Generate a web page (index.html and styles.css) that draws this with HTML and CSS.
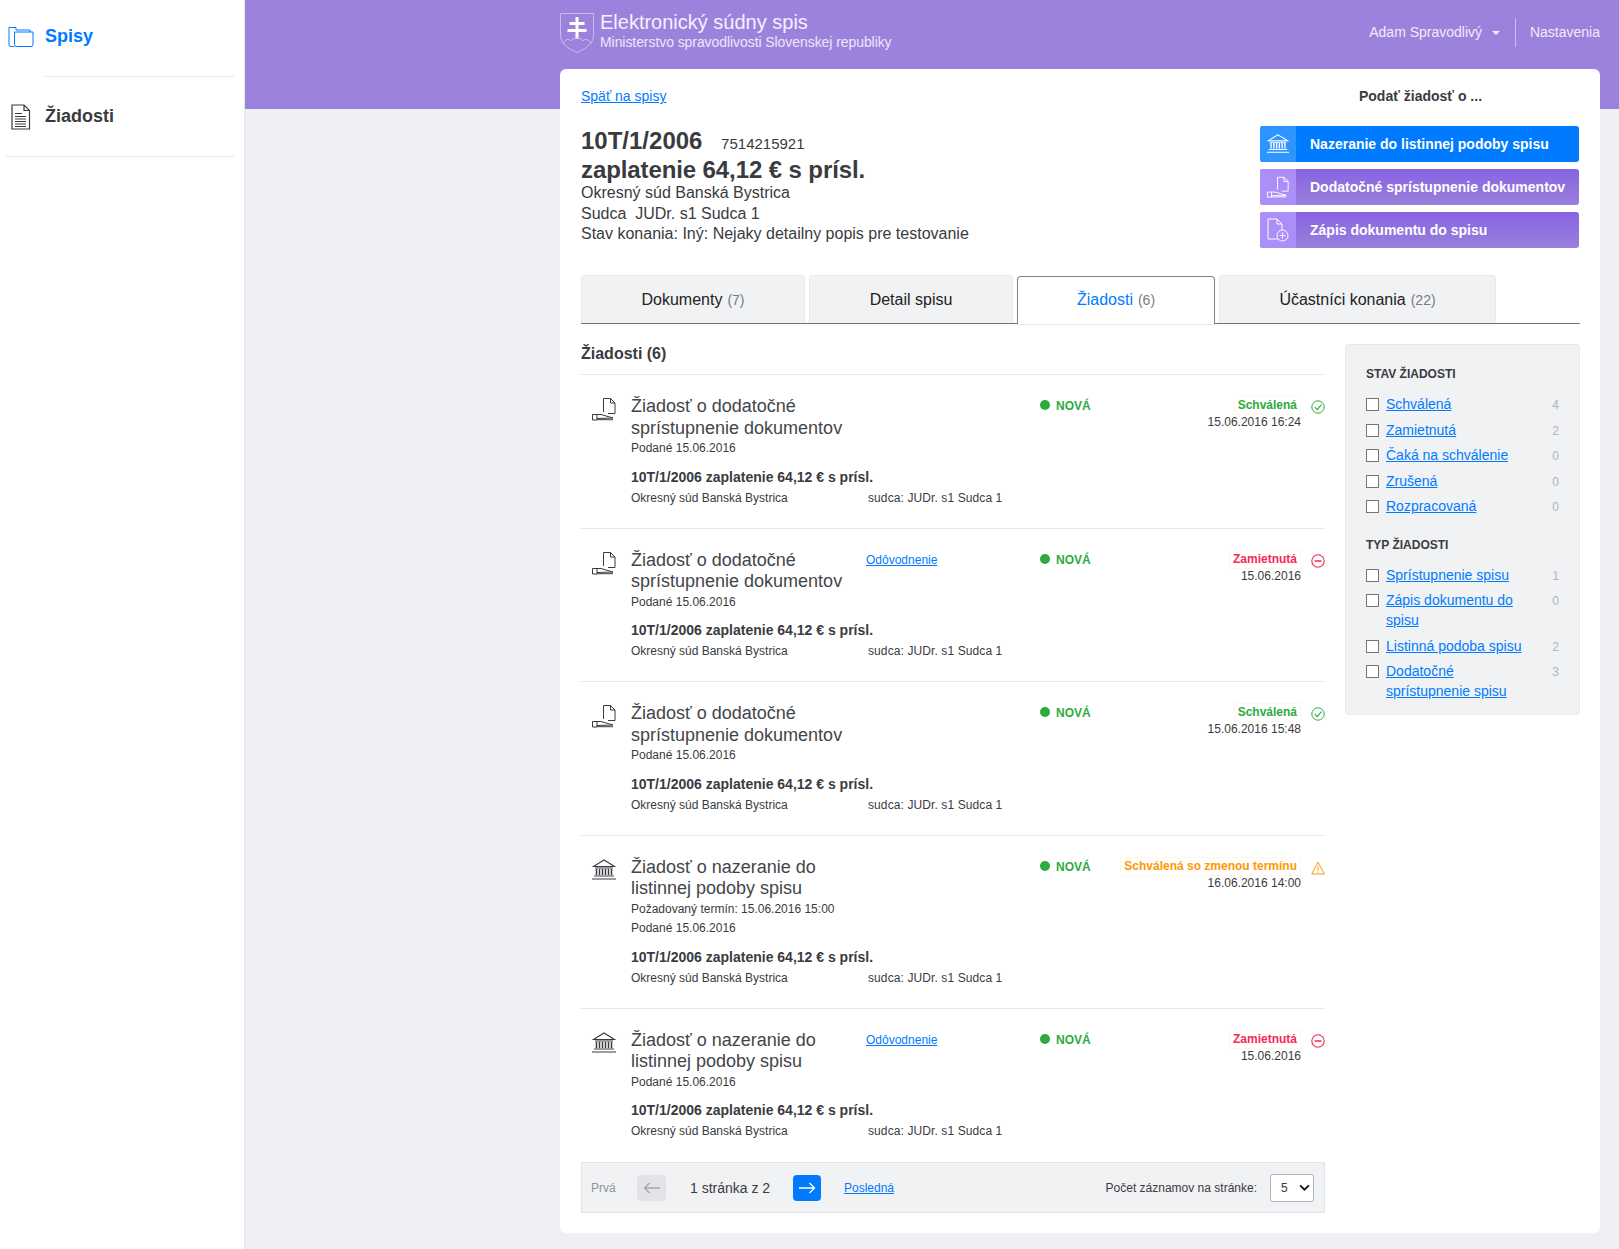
FILE: index.html
```html
<!DOCTYPE html>
<html lang="sk">
	<head>
		<meta charset="utf-8">
		<title>Elektronický súdny spis</title>
		<link rel="stylesheet" href="styles.css">
	</head>
	<body>
		<svg class="sprite" xmlns="http://www.w3.org/2000/svg">
			<symbol id="i-court" viewBox="0 0 26 24">
				<path d="M13 2 2.500 8.500h21zM4 10h18M3 18h20M1 21h24" fill="none" stroke="currentColor" stroke-width="1.100"/>
				<path d="M5.500 11v6M8.500 11v6M11.500 11v6M14.500 11v6M17.500 11v6M20.500 11v6" fill="none" stroke="currentColor" stroke-width="1.500"/>
			</symbol>
			<symbol id="i-hand" viewBox="0 0 26 24">
				<path d="M12.500 15V1.500h7l4.500 4.500V16.500h-7M19.500 1.500V6H24" fill="none" stroke="currentColor" stroke-width="1"/>
				<path d="M1.500 17.500h4.500v5.500H1.500zM6 17.500h4l12 3.500-16 .5M6 22.700h16" fill="none" stroke="currentColor" stroke-width="1"/>
			</symbol>
			<symbol id="i-doc-add" viewBox="0 0 22 24">
				<path d="M11 21H1V1h9l5 5v6M10 1v5h5" fill="none" stroke="currentColor" stroke-width="1"/>
				<circle cx="15.500" cy="17.500" r="5.500" fill="none" stroke="currentColor" stroke-width="1"/>
				<path d="M15.500 14.500v6M12.500 17.500h6" fill="none" stroke="currentColor" stroke-width="1"/>
			</symbol>
			<symbol id="i-ok" viewBox="0 0 14 14">
				<circle cx="7" cy="7" r="6.200" fill="none" stroke="currentColor" stroke-width="1"/>
				<path d="M3.800 7.200 6.200 9.600 10.500 4.600" fill="none" stroke="currentColor" stroke-width="1.100"/>
			</symbol>
			<symbol id="i-no" viewBox="0 0 14 14">
				<circle cx="7" cy="7" r="6.200" fill="none" stroke="currentColor" stroke-width="1.100"/>
				<path d="M3.500 7h7" fill="none" stroke="currentColor" stroke-width="1.500"/>
			</symbol>
			<symbol id="i-warn" viewBox="0 0 14 14">
				<path d="M7 1.200 13.300 13H.700zM7 5v4.500M7 10.500v1.200" fill="none" stroke="currentColor" stroke-width="1"/>
			</symbol>
		</svg>

		<div class="app">
			<aside class="sidebar">
				<a class="nav-item nav-active">
					<svg class="nav-icon" viewBox="0 0 26 22"><path d="M6 20.500H3a2 2 0 0 1-2-2V1.500h7V4h14v2" fill="none" stroke="currentColor" stroke-width="1"/><path d="M6.500 6H25v12.500a2 2 0 0 1-2 2H8.500a2 2 0 0 1-2-2z" fill="none" stroke="currentColor" stroke-width="1"/></svg>
					Spisy
				</a>
				<hr class="nav-line nav-line-short">
				<a class="nav-item">
					<svg class="nav-icon" viewBox="0 0 26 26"><path d="M4 1h12l5.500 5.500V25H4zM16 1v5.500h5.500" fill="none" stroke="currentColor" stroke-width="1.200"/><path d="M7 9.500h7M7 12.500h11M7 15h11M7 17.500h11M7 20h11M7 22.500h11" fill="none" stroke="currentColor" stroke-width="1"/></svg>
					Žiadosti
				</a>
				<hr class="nav-line">
			</aside>

			<div class="main">
				<header class="topbar">
					<div class="brand">
						<svg class="crest" viewBox="0 0 34 40">
							<path d="M.500.500h33V22c0 9-8 13.500-16.500 17.500C8.500 35.500.500 31 .500 22z" fill="none" stroke="#c9bbee" stroke-width="1"/>
							<path d="M15.500 4h3v5h6v3h-6v4h8v3h-8v7h-3v-7h-8v-3h8v-4h-6V9h6z" fill="#fff"/>
							<path d="M3 31c2-5 6-6 8-3 2-4 10-4 12 0 2-3 6-2 8 3" fill="none" stroke="#c9bbee" stroke-width="1"/>
						</svg>
						<div>
							<div class="brand-title">Elektronický súdny spis</div>
							<div class="brand-sub">Ministerstvo spravodlivosti Slovenskej republiky</div>
						</div>
					</div>
					<div class="user-menu">
						<span class="user-name">Adam Spravodlivý <i class="caret"></i></span>
						<span class="user-settings">Nastavenia</span>
					</div>
				</header>

				<section class="card">
					<div class="case-head">
						<div class="case-info">
							<a class="link back-link" href="#">Späť na spisy</a>
							<div class="case-number">10T/1/2006 <span>7514215921</span></div>
							<div class="case-title">zaplatenie 64,12 € s prísl.</div>
							<div class="case-line">Okresný súd Banská Bystrica</div>
							<div class="case-line">Sudca&nbsp; JUDr. s1 Sudca 1</div>
							<div class="case-line">Stav konania: Iný: Nejaky detailny popis pre testovanie</div>
						</div>
						<div class="case-actions">
							<div class="actions-title">Podať žiadosť o ...</div>
							<a class="action action-blue"><span class="action-icon"><svg><use href="#i-court"/></svg></span>Nazeranie do listinnej podoby spisu</a>
							<a class="action"><span class="action-icon"><svg><use href="#i-hand"/></svg></span>Dodatočné sprístupnenie dokumentov</a>
							<a class="action"><span class="action-icon"><svg><use href="#i-doc-add"/></svg></span>Zápis dokumentu do spisu</a>
						</div>
					</div>

					<nav class="tabs">
						<a class="tab tab-1">Dokumenty <small>(7)</small></a>
						<a class="tab tab-2">Detail spisu</a>
						<a class="tab tab-3 tab-active">Žiadosti <small>(6)</small></a>
						<a class="tab tab-4">Účastníci konania <small>(22)</small></a>
					</nav>

					<div class="content">
						<div class="list">
							<h2 class="list-title">Žiadosti (6)</h2>

							<article class="item">
								<svg class="item-icon"><use href="#i-hand"/></svg>
								<div class="item-head">
									<div class="item-name">Žiadosť o dodatočné sprístupnenie dokumentov</div>
									<div class="item-small">Podané 15.06.2016</div>
								</div>
								<div class="item-reason"></div>
								<div class="item-new">NOVÁ</div>
								<div class="item-state state-ok">
									<div><span class="state-label">Schválená</span><div>15.06.2016 16:24</div></div>
									<svg><use href="#i-ok"/></svg>
								</div>
								<div class="item-case">
									<strong>10T/1/2006 zaplatenie 64,12 € s prísl.</strong>
									<div class="item-court"><span>Okresný súd Banská Bystrica</span><span>sudca: JUDr. s1 Sudca 1</span></div>
								</div>
							</article>

							<article class="item">
								<svg class="item-icon"><use href="#i-hand"/></svg>
								<div class="item-head">
									<div class="item-name">Žiadosť o dodatočné sprístupnenie dokumentov</div>
									<div class="item-small">Podané 15.06.2016</div>
								</div>
								<div class="item-reason"><a class="link" href="#">Odôvodnenie</a></div>
								<div class="item-new">NOVÁ</div>
								<div class="item-state state-no">
									<div><span class="state-label">Zamietnutá</span><div>15.06.2016</div></div>
									<svg><use href="#i-no"/></svg>
								</div>
								<div class="item-case">
									<strong>10T/1/2006 zaplatenie 64,12 € s prísl.</strong>
									<div class="item-court"><span>Okresný súd Banská Bystrica</span><span>sudca: JUDr. s1 Sudca 1</span></div>
								</div>
							</article>

							<article class="item">
								<svg class="item-icon"><use href="#i-hand"/></svg>
								<div class="item-head">
									<div class="item-name">Žiadosť o dodatočné sprístupnenie dokumentov</div>
									<div class="item-small">Podané 15.06.2016</div>
								</div>
								<div class="item-reason"></div>
								<div class="item-new">NOVÁ</div>
								<div class="item-state state-ok">
									<div><span class="state-label">Schválená</span><div>15.06.2016 15:48</div></div>
									<svg><use href="#i-ok"/></svg>
								</div>
								<div class="item-case">
									<strong>10T/1/2006 zaplatenie 64,12 € s prísl.</strong>
									<div class="item-court"><span>Okresný súd Banská Bystrica</span><span>sudca: JUDr. s1 Sudca 1</span></div>
								</div>
							</article>

							<article class="item">
								<svg class="item-icon"><use href="#i-court"/></svg>
								<div class="item-head">
									<div class="item-name">Žiadosť o nazeranie do listinnej podoby spisu</div>
									<div class="item-small">Požadovaný termín: 15.06.2016 15:00</div>
									<div class="item-small">Podané 15.06.2016</div>
								</div>
								<div class="item-reason"></div>
								<div class="item-new">NOVÁ</div>
								<div class="item-state state-warn">
									<div><span class="state-label">Schválená so zmenou termínu</span><div>16.06.2016 14:00</div></div>
									<svg><use href="#i-warn"/></svg>
								</div>
								<div class="item-case">
									<strong>10T/1/2006 zaplatenie 64,12 € s prísl.</strong>
									<div class="item-court"><span>Okresný súd Banská Bystrica</span><span>sudca: JUDr. s1 Sudca 1</span></div>
								</div>
							</article>

							<article class="item">
								<svg class="item-icon"><use href="#i-court"/></svg>
								<div class="item-head">
									<div class="item-name">Žiadosť o nazeranie do listinnej podoby spisu</div>
									<div class="item-small">Podané 15.06.2016</div>
								</div>
								<div class="item-reason"><a class="link" href="#">Odôvodnenie</a></div>
								<div class="item-new">NOVÁ</div>
								<div class="item-state state-no">
									<div><span class="state-label">Zamietnutá</span><div>15.06.2016</div></div>
									<svg><use href="#i-no"/></svg>
								</div>
								<div class="item-case">
									<strong>10T/1/2006 zaplatenie 64,12 € s prísl.</strong>
									<div class="item-court"><span>Okresný súd Banská Bystrica</span><span>sudca: JUDr. s1 Sudca 1</span></div>
								</div>
							</article>

							<div class="pager">
								<span class="pager-first">Prvá</span>
								<span class="pager-btn pager-off"><svg viewBox="0 0 18 12"><path d="M17 6H1.500M6.500 1 1.500 6l5 5" fill="none" stroke="currentColor" stroke-width="1.300"/></svg></span>
								<span class="pager-text">1 stránka z 2</span>
								<span class="pager-btn pager-on"><svg viewBox="0 0 18 12"><path d="M1 6h15.500M11.500 1l5 5-5 5" fill="none" stroke="currentColor" stroke-width="1.300"/></svg></span>
								<a class="link pager-last" href="#">Posledná</a>
								<label class="pager-size">Počet záznamov na stránke:
									<span class="size-select">
										<select><option>5</option></select>
										<svg viewBox="0 0 12 8"><path d="M1 1.500 6 6.500l5-5" fill="none" stroke="currentColor" stroke-width="2"/></svg>
									</span>
								</label>
							</div>
						</div>

						<aside class="filter">
							<h3>Stav žiadosti</h3>
							<ul>
								<li><input type="checkbox"><a class="link" href="#">Schválená</a><span>4</span></li>
								<li><input type="checkbox"><a class="link" href="#">Zamietnutá</a><span>2</span></li>
								<li><input type="checkbox"><a class="link" href="#">Čaká na schválenie</a><span>0</span></li>
								<li><input type="checkbox"><a class="link" href="#">Zrušená</a><span>0</span></li>
								<li><input type="checkbox"><a class="link" href="#">Rozpracovaná</a><span>0</span></li>
							</ul>
							<h3>Typ žiadosti</h3>
							<ul>
								<li><input type="checkbox"><a class="link" href="#">Sprístupnenie spisu</a><span>1</span></li>
								<li><input type="checkbox"><a class="link" href="#">Zápis dokumentu do spisu</a><span>0</span></li>
								<li><input type="checkbox"><a class="link" href="#">Listinná podoba spisu</a><span>2</span></li>
								<li><input type="checkbox"><a class="link" href="#">Dodatočné sprístupnenie spisu</a><span>3</span></li>
							</ul>
						</aside>
					</div>
				</section>
			</div>
		</div>
	</body>
</html>
```

FILE: styles.css
```css
* {
	box-sizing: border-box;
}
html, body {
	height: 100%;
}
body {
	margin: 0;
	background: #eff0f4;
	color: #3a3b40;
	font-family: "Liberation Sans", Arial, sans-serif;
	font-size: 14px;
	overflow: hidden;
}
.sprite {
	display: none;
}
.link {
	color: #007bff;
	text-decoration: underline;
}
.app {
	display: flex;
	min-height: 100%;
}

/* sidebar */
.sidebar {
	width: 245px;
	flex: none;
	background: #fff;
	border-right: 1px solid #e6e7eb;
	padding: 0 10px 0 6px;
}
.nav-item {
	display: flex;
	align-items: center;
	height: 79px;
	font-size: 18px;
	font-weight: bold;
	color: #3a3b40;
}
.nav-active {
	height: 76px;
	color: #007bff;
	padding-bottom: 3px;
}
.nav-icon {
	width: 26px;
	height: 26px;
	margin: 0 11px 0 2px;
	flex: none;
}
.nav-line {
	border: 0;
	border-top: 1px solid #e6e7eb;
	margin: 0;
}
.nav-line-short {
	margin-left: 39px;
}

/* purple band */
.main {
	flex: 1;
	min-width: 0;
}
.topbar {
	display: flex;
	justify-content: space-between;
	height: 109px;
	background: #9d82dd;
	color: #fff;
	padding: 13px 19px 0 315px;
}
.brand {
	display: flex;
	align-self: flex-start;
}
.crest {
	width: 34px;
	height: 40px;
	margin-right: 6px;
}
.brand-title {
	font-size: 20px;
	line-height: 19px;
	color: #f4f0fc;
}
.brand-sub {
	font-size: 14px;
	line-height: 19px;
	letter-spacing: -.07px;
	color: #ece6f8;
	margin-top: 1px;
}
.user-menu {
	display: flex;
	align-self: flex-start;
	margin-top: 5px;
	color: #f0ebfa;
	line-height: 29px;
}
.user-name {
	padding-right: 15px;
	border-right: 1px solid #cdbfee;
}
.caret {
	display: inline-block;
	border: 4px solid transparent;
	border-top-color: #f0ebfa;
	border-bottom: 0;
	margin: 0 0 2px 6px;
}
.user-settings {
	padding-left: 14px;
}

/* card */
.card {
	width: 1040px;
	margin: -40px 0 0 315px;
	padding: 17px 20px 20px 21px;
	background: #fff;
	border-radius: 6px;
}
.case-head {
	display: flex;
	justify-content: space-between;
	height: 189px;
}
.back-link {
	display: block;
	line-height: 20px;
	margin-bottom: 21px;
}
.case-number {
	font-size: 24px;
	font-weight: bold;
	line-height: 28px;
}
.case-number span {
	font-size: 15px;
	font-weight: normal;
	margin-left: 12px;
}
.case-title {
	font-size: 24px;
	font-weight: bold;
	line-height: 26px;
	letter-spacing: -.1px;
	margin-top: -1px;
}
.case-line {
	font-size: 16px;
	line-height: 20.500px;
}
.case-actions {
	width: 319px;
	margin-right: 1px;
}
.actions-title {
	font-weight: bold;
	text-align: center;
	line-height: 20px;
	padding-left: 2px;
	margin-bottom: 20px;
}
.action {
	display: flex;
	align-items: center;
	height: 36px;
	margin-bottom: 7px;
	border-radius: 3px;
	background: linear-gradient(#8763e3, #9a7fdb);
	color: #fff;
	font-weight: bold;
	overflow: hidden;
}
.action-blue {
	background: #007bff;
}
.action-icon {
	display: flex;
	align-items: center;
	justify-content: center;
	width: 36px;
	height: 36px;
	margin-right: 14px;
	background: #ab8ef8;
}
.action-blue .action-icon {
	background: #2e95ff;
}
.action-icon svg {
	width: 24px;
	height: 24px;
}

/* tabs */
.tabs {
	display: flex;
	gap: 4px;
	height: 49px;
	border-bottom: 1px solid #6f7484;
}
.tab {
	display: flex;
	align-items: center;
	justify-content: center;
	gap: 5px;
	height: 48px;
	background: #f1f2f4;
	border: 1px solid #e8e9ec;
	border-bottom: 0;
	border-radius: 4px 4px 0 0;
	color: #222;
	font-size: 16px;
}
.tab small {
	font-size: 14px;
	color: #777a85;
}
.tab-1 { width: 224px; }
.tab-2 { width: 204px; }
.tab-3 { width: 198px; }
.tab-4 { width: 277px; }
.tab-active {
	margin-top: 1px;
	height: 48px;
	padding-bottom: 1px;
	background: #fff;
	color: #007bff;
	border-color: #7a8090;
	box-shadow: 0 1px 0 #e6e6e6;
}

/* list */
.content {
	display: flex;
	justify-content: space-between;
}
.list {
	width: 744px;
}
.list-title {
	margin: 0;
	height: 51px;
	font-size: 16px;
	line-height: 60px;
	border-bottom: 1px solid #e6e7eb;
}
.item {
	display: grid;
	grid-template-columns: 50px 235px 174px 100px minmax(0, 1fr);
	padding: 21px 0 19px;
	border-bottom: 1px solid #e6e7eb;
}
.item:last-of-type {
	border-bottom: 0;
	padding-bottom: 20px;
}
.item-icon {
	width: 26px;
	height: 24px;
	margin: 1px 0 0 10px;
	color: #3a3b40;
}
.item-name {
	font-size: 18px;
	line-height: 21.500px;
	color: #44454a;
}
.item-small {
	font-size: 12px;
	line-height: 19.500px;
}
.item-reason {
	font-size: 12px;
	line-height: 20px;
}
.item-new {
	color: #2eaa3f;
	font-size: 12px;
	font-weight: bold;
	line-height: 20px;
}
.item-new::before {
	content: "";
	display: inline-block;
	width: 10px;
	height: 10px;
	border-radius: 50%;
	background: #2eaa3f;
	margin-right: 6px;
}
.item-state {
	display: flex;
	justify-content: flex-end;
	font-size: 12px;
	text-align: right;
	line-height: 16px;
	white-space: nowrap;
}
.item-state svg {
	flex: none;
	width: 14px;
	height: 14px;
	margin: 4px 0 0 10px;
}
.state-label {
	display: block;
	width: fit-content;
	margin-left: auto;
	font-weight: bold;
	line-height: 17px;
	padding: 0 3px;
	border: 1px solid #fff8e3;
}
.state-ok { color: #2eaa3f; }
.state-no { color: #f5285a; }
.state-warn { color: #ff9800; }
.item-state div div {
	color: #3a3b40;
	margin-top: -1px;
}
.item-case {
	grid-column: 2 / -1;
	margin-top: 8px;
}
.item-case strong {
	display: block;
	line-height: 20px;
}
.item-court {
	display: flex;
	font-size: 12px;
	line-height: 22px;
}
.item-court span:first-child {
	width: 237px;
}
.item-court span:last-child {
	letter-spacing: .1px;
}

/* paging */
.pager {
	display: flex;
	align-items: center;
	height: 51px;
	padding: 0 10px 0 9px;
	background: #f1f2f4;
	border: 1px solid #e3e4e8;
	font-size: 12px;
}
.pager-first {
	color: #8f9299;
	width: 46px;
}
.pager-btn {
	display: flex;
	align-items: center;
	justify-content: center;
	width: 29px;
	height: 26px;
	border-radius: 4px;
}
.pager-btn svg {
	width: 18px;
	height: 12px;
}
.pager-off {
	background: #e2e3e8;
	color: #a5a7ad;
}
.pager-on {
	width: 28px;
	background: #007bff;
	color: #fff;
}
.pager-text {
	font-size: 14px;
	width: 127px;
	padding-left: 24px;
}
.pager-last {
	margin-left: 23px;
}
.pager-size {
	display: flex;
	align-items: center;
	gap: 13px;
	margin-left: auto;
}
.size-select {
	position: relative;
	display: block;
	width: 44px;
	height: 28px;
}
.size-select select {
	display: block;
	width: 100%;
	height: 100%;
	appearance: none;
	background: #fff;
	border: 1px solid #a9b0c0;
	border-radius: 3px;
	color: #3a3b40;
	font-size: 12px;
	font-family: inherit;
	padding-left: 10px;
}
.size-select svg {
	position: absolute;
	top: 10px;
	right: 4px;
	width: 11px;
	height: 7px;
	pointer-events: none;
	color: #111;
}

/* filter */
.filter {
	width: 235px;
	height: 371px;
	margin-top: 20px;
	padding: 21px 20px 0 20px;
	background: #f1f2f4;
	border: 1px solid #e8e9ec;
	border-radius: 4px;
}
.filter h3 {
	margin: 0 0 11px;
	font-size: 12px;
	line-height: 17px;
	text-transform: uppercase;
}
.filter ul {
	list-style: none;
	margin: 0 0 20.500px;
	padding: 0;
}
.filter li {
	display: flex;
	align-items: flex-start;
	line-height: 20px;
	margin-bottom: 5.500px;
}
.filter input {
	flex: none;
	width: 13px;
	height: 13px;
	margin: 4px 7px 0 0;
	appearance: none;
	background: #fff;
	border: 1px solid #767676;
}
.filter a {
	flex: 1;
}
.filter li span {
	width: 23px;
	height: 20px;
	flex: none;
	text-align: right;
	font-size: 12px;
	line-height: 22px;
	color: #b0b4bd;
}
```
